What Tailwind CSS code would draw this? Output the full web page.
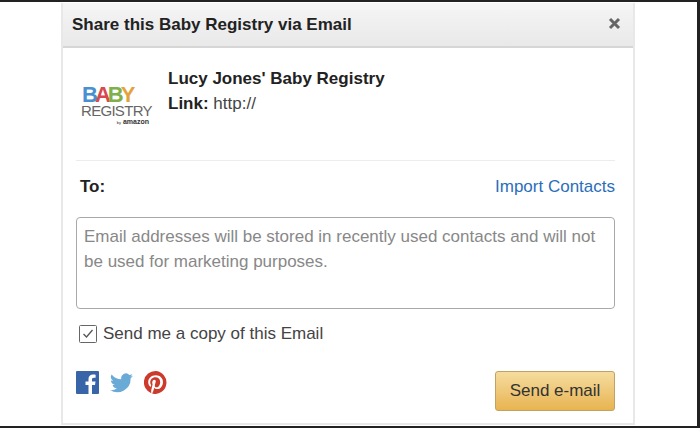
<!DOCTYPE html>
<html lang="en">
<head>
    <meta charset="UTF-8">
    <title>Share this Baby Registry via Email</title>
    <script src="https://cdn.jsdelivr.net/npm/@tailwindcss/browser@4"></script>
</head>
<body class="bg-white font-['Liberation_Sans',Arial,sans-serif]">
    <div class="w-[700px] h-[428px] overflow-hidden flex flex-col border-t-2 border-b-2 border-r-[3px] border-[#222]">
        <div class="ml-[61px] mt-[1px] w-[574px] h-[422px] border-x-2 border-b-2 border-[#e8e8e8] flex flex-col">
            <!-- header -->
            <div class="h-[45px] shrink-0 flex items-center justify-between pl-[9px] pr-[12px] bg-gradient-to-b from-[#f5f5f5] to-[#e9e9e9] border-b-2 border-[#d6d6d6]">
                <h1 class="text-[17px] font-bold text-[#222]">Share this Baby Registry via Email</h1>
                <svg class="mb-[2px]" width="13" height="13" viewBox="0 0 13 13"><path d="M2 2l9 9M11 2l-9 9" stroke="#666" stroke-width="3"/></svg>
            </div>
            <div class="flex-1 flex flex-col pl-[13px] pr-[18px]">
                <!-- registry info -->
                <div class="flex h-[113px] border-b border-[#ececec]">
                    <div class="w-[92px] pt-[38px] pl-[6px] shrink-0">
                        <div class="h-[18px] text-[22px] leading-[18px] font-bold tracking-[-3px]"><span class="text-[#4a90d0]">B</span><span class="text-[#d8494f]">A</span><span class="text-[#7fb04a]">B</span><span class="text-[#e3a33c]">Y</span></div>
                        <div class="h-[14px] -ml-[1px] text-[15px] leading-[14px] tracking-[-0.7px] text-[#666]">REGISTRY</div>
                        <div class="h-[7px] text-[7px] leading-[7px] font-bold text-right pr-[19px] text-[#333]"><span class="text-[4px] font-normal">by</span> amazon</div>
                    </div>
                    <div class="pt-[18px] text-[17px] leading-[25px] text-[#222]">
                        <div class="font-bold">Lucy Jones' Baby Registry</div>
                        <div><span class="font-bold">Link:</span> <span class="text-[#444]">http://</span></div>
                    </div>
                </div>
                <!-- recipients -->
                <div class="flex justify-between items-center h-[52px] pl-[4px] text-[17px]">
                    <span class="font-bold text-[#222]">To:</span>
                    <a class="text-[#2a6ebb]">Import Contacts</a>
                </div>
                <div class="mt-[4px] h-[92px] border border-[#a9a9a9] rounded-[4px] px-[7px] pt-[6px] text-[17px] leading-[25px] text-[#888]">Email addresses will be stored in recently used contacts and will not be used for marketing purposes.</div>
                <label class="mt-[15px] flex items-center gap-[6px] pl-[3px] text-[17px] leading-[20px] text-[#444]">
                    <svg width="18" height="18" viewBox="0 0 18 18" class="shrink-0"><rect x=".5" y=".5" width="17" height="17" rx="1" fill="#fff" stroke="#666"/><path d="M4.500 9l3 3 6-7" fill="none" stroke="#555" stroke-width="1.3"/></svg>
                    Send me a copy of this Email
                </label>
                <!-- share + send -->
                <div class="mt-[27px] flex justify-between items-start">
                    <div class="flex items-center gap-[11px]">
                        <svg width="23" height="23" viewBox="0 0 23 23"><rect width="23" height="23" rx="1" fill="#3765a8"/><path d="M16 23v-9h3l.5-3.500H16V8.500c0-1 .4-1.700 1.800-1.700h1.800V3.700c-.5 0-1.500-.2-2.600-.2-2.700 0-4.500 1.600-4.500 4.600v2.400H9.500V14h3v9z" fill="#fff"/></svg>
                        <svg width="23" height="20" viewBox="0 0 24 20"><path d="M24 2.400a9.800 9.800 0 0 1-2.800.8A4.900 4.900 0 0 0 23.300.500a9.800 9.800 0 0 1-3.100 1.200A4.900 4.900 0 0 0 11.800 6.200 14 14 0 0 1 1.700 1a4.900 4.900 0 0 0 1.500 6.600 4.900 4.900 0 0 1-2.200-.6c0 2.400 1.700 4.400 3.900 4.900a4.900 4.900 0 0 1-2.200.1 4.900 4.900 0 0 0 4.600 3.400A9.900 9.900 0 0 1 0 17.400 14 14 0 0 0 21.500 5c1-.7 1.900-1.600 2.500-2.600z" fill="#6aaad6"/></svg>
                        <svg width="23" height="23" viewBox="0 0 24 24"><path d="M12 0a12 12 0 0 0-4.400 23.200c-.1-1-.2-2.400 0-3.400l1.400-6s-.4-.7-.4-1.800c0-1.700 1-2.900 2.200-2.900 1 0 1.500.8 1.500 1.700 0 1-.7 2.600-1 4-.3 1.200.6 2.200 1.800 2.200 2.100 0 3.800-2.300 3.800-5.500 0-2.900-2.100-4.900-5-4.900-3.400 0-5.400 2.600-5.400 5.200 0 1 .4 2.100.9 2.700.1.100.1.200.1.300l-.3 1.400c-.1.200-.2.300-.4.200-1.500-.7-2.400-2.900-2.400-4.700 0-3.800 2.800-7.300 8-7.300 4.200 0 7.400 3 7.400 7 0 4.200-2.600 7.500-6.300 7.500-1.200 0-2.400-.6-2.800-1.400l-.8 2.900c-.3 1-1 2.400-1.500 3.200A12 12 0 1 0 12 0z" fill="#cc3a2b"/></svg>
                    </div>
                    <button class="w-[120px] h-[40px] rounded-[3px] border border-[#c0a262] bg-gradient-to-b from-[#f5dc9e] to-[#e8b44f] text-[17px] text-[#333]">Send e-mail</button>
                </div>
            </div>
        </div>
    </div>
</body>
</html>
